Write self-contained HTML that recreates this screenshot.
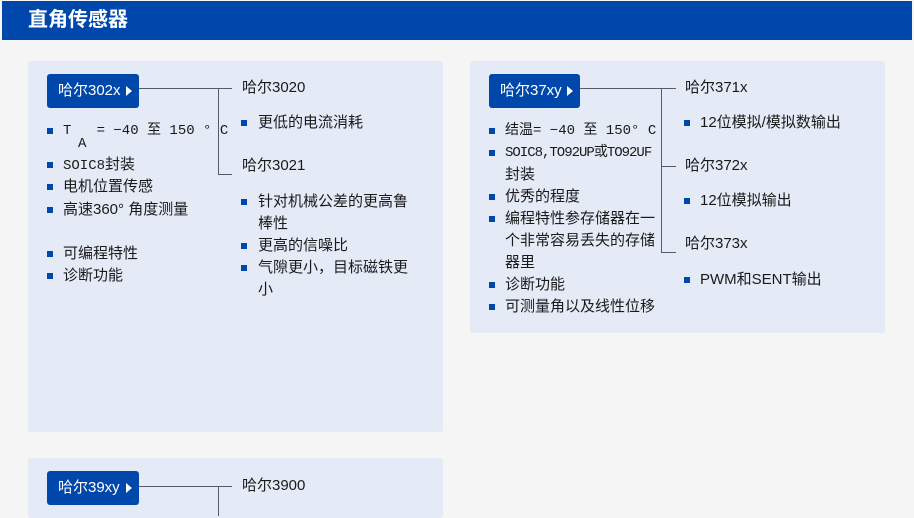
<!DOCTYPE html><html><head><meta charset="utf-8"><style>
*{margin:0;padding:0;box-sizing:border-box}
body{width:914px;height:512px;overflow:hidden;background:#f5f5f5;font-family:"Liberation Sans","Noto Sans CJK SC",sans-serif;color:#1a1a1a;font-size:15px;position:relative}
.hd{position:absolute;left:2px;top:1px;width:910px;height:39px;background:#0047ab}
.hd span{position:absolute;left:26px;top:6px;color:#fff;font-size:20px;font-weight:bold;line-height:26px}
.card{position:absolute;background:#e4eaf6;border-radius:3px}
.btn{position:absolute;height:34px;background:#0047ab;border-radius:3px;color:#fff;font-size:15px;line-height:34px;padding-left:11px}
.btn:after{content:"";position:absolute;right:7px;top:12px;border-left:6px solid #fff;border-top:5px solid transparent;border-bottom:5px solid transparent}
.l{position:absolute;background:#555b66}
.t{position:absolute;white-space:nowrap;line-height:22px}
.m{font-family:"Liberation Mono","Noto Sans CJK SC",monospace;font-size:14px}
.b{position:absolute;width:6px;height:6px;background:#0047ab}
</style></head><body>
<div class="hd"><span>直角传感器</span></div>
<div class="card" style="left:28px;top:61px;width:415px;height:371px"></div>
<div class="card" style="left:470px;top:61px;width:415px;height:272px"></div>
<div class="card" style="left:28px;top:458px;width:415px;height:60px"></div>

<div class="btn" style="left:47px;top:74px;width:92px">哈尔302x</div>
<div class="l" style="left:139px;top:88px;width:93px;height:1px"></div>
<div class="l" style="left:218px;top:88px;width:1px;height:87px"></div>
<div class="l" style="left:218px;top:174px;width:14px;height:1px"></div>
<div class="t" style="left:242px;top:77px">哈尔3020</div>
<div class="t" style="left:242px;top:155px">哈尔3021</div>
<div class="b" style="left:241px;top:120px"></div><div class="t" style="left:258px;top:112px">更低的电流消耗</div>
<div class="b" style="left:241px;top:199px"></div><div class="t" style="left:258px;top:191px">针对机械公差的更高鲁</div>
<div class="t" style="left:258px;top:213px">棒性</div>
<div class="b" style="left:241px;top:243px"></div><div class="t" style="left:258px;top:235px">更高的信噪比</div>
<div class="b" style="left:241px;top:265px"></div><div class="t" style="left:258px;top:257px">气隙更小，目标磁铁更</div>
<div class="t" style="left:258px;top:279px">小</div>

<div class="b" style="left:47px;top:128px"></div><div class="t m" style="left:63px;top:120px">T&nbsp;&nbsp;&nbsp;= −40 至 150 ° C</div>
<div class="t m" style="left:78px;top:133px">A</div>
<div class="b" style="left:47px;top:162px"></div><div class="t" style="left:63px;top:154px"><span class="m">SOIC8</span>封装</div>
<div class="b" style="left:47px;top:184px"></div><div class="t" style="left:63px;top:176px">电机位置传感</div>
<div class="b" style="left:47px;top:207px"></div><div class="t" style="left:63px;top:199px">高速360° 角度测量</div>
<div class="b" style="left:47px;top:251px"></div><div class="t" style="left:63px;top:243px">可编程特性</div>
<div class="b" style="left:47px;top:273px"></div><div class="t" style="left:63px;top:265px">诊断功能</div>

<div class="btn" style="left:489px;top:74px;width:91px">哈尔37xy</div>
<div class="l" style="left:580px;top:88px;width:96px;height:1px"></div>
<div class="l" style="left:661px;top:88px;width:1px;height:165px"></div>
<div class="l" style="left:661px;top:166px;width:15px;height:1px"></div>
<div class="l" style="left:661px;top:252px;width:15px;height:1px"></div>
<div class="t" style="left:685px;top:77px">哈尔371x</div>
<div class="t" style="left:685px;top:155px">哈尔372x</div>
<div class="t" style="left:685px;top:233px">哈尔373x</div>
<div class="b" style="left:684px;top:120px"></div><div class="t" style="left:700px;top:112px">12位模拟/模拟数输出</div>
<div class="b" style="left:684px;top:198px"></div><div class="t" style="left:700px;top:190px">12位模拟输出</div>
<div class="b" style="left:684px;top:277px"></div><div class="t" style="left:700px;top:269px">PWM和SENT输出</div>

<div class="b" style="left:489px;top:128px"></div><div class="t m" style="left:505px;top:120px">结温= −40 至 150° C</div>
<div class="b" style="left:489px;top:150px"></div><div class="t m" style="left:505px;top:142px;letter-spacing:-1px">SOIC8,TO92UP或TO92UF</div>
<div class="t" style="left:505px;top:164px">封装</div>
<div class="b" style="left:489px;top:194px"></div><div class="t" style="left:505px;top:186px">优秀的程度</div>
<div class="b" style="left:489px;top:216px"></div><div class="t" style="left:505px;top:208px">编程特性参存储器在一</div>
<div class="t" style="left:505px;top:230px">个非常容易丢失的存储</div>
<div class="t" style="left:505px;top:252px">器里</div>
<div class="b" style="left:489px;top:282px"></div><div class="t" style="left:505px;top:274px">诊断功能</div>
<div class="b" style="left:489px;top:304px"></div><div class="t" style="left:505px;top:296px">可测量角以及线性位移</div>

<div class="btn" style="left:47px;top:471px;width:92px">哈尔39xy</div>
<div class="l" style="left:139px;top:486px;width:93px;height:1px"></div>
<div class="l" style="left:218px;top:486px;width:1px;height:30px"></div>
<div class="t" style="left:242px;top:475px">哈尔3900</div>
</body></html>
